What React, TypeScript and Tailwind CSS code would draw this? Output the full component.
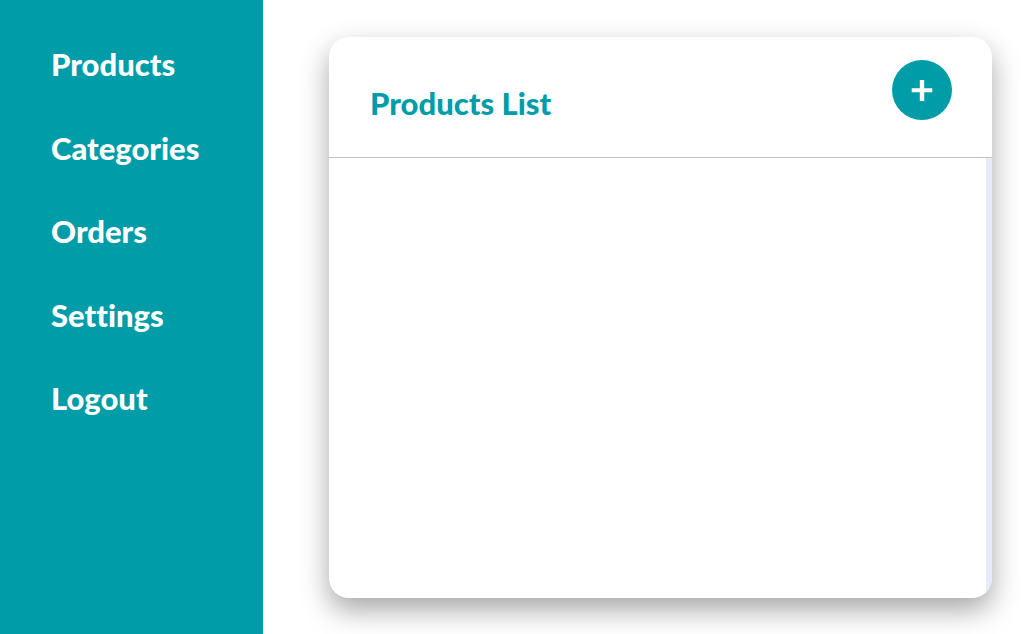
const links = ["Products", "Categories", "Orders", "Settings", "Logout"];

export default function App() {
  return (
    <div className="flex min-h-screen bg-white font-['Lato',sans-serif] font-black [font-variant-ligatures:none]">
      <aside className="w-[263px] shrink-0 bg-[#009ca8] pt-6">
        <nav aria-label="Main">
          <ul className="grid min-h-[418px] auto-rows-fr">
            {links.map((label) => (
              <li key={label}>
                <a
                  href={"#" + label.toLowerCase()}
                  className="block pl-[51px] text-[31px] leading-[80px] text-white"
                >
                  {label}
                </a>
              </li>
            ))}
          </ul>
        </nav>
      </aside>
      <main className="flex min-w-0 flex-1 pt-[37px] pr-[31px] pb-9 pl-[66px]">
        <section className="flex flex-1 flex-col overflow-hidden rounded-[20px] bg-white shadow-[0_12px_28px_rgba(0,0,0,0.35)]">
          <header className="flex items-start justify-between border-b border-[#c4c4c4] pt-[23px] pr-10 pb-9 pl-[41px]">
            <h1 className="pt-[25px] text-[31px] leading-9 text-[#009ca8]">
              Products List
            </h1>
            <button
              type="button"
              aria-label="Add product"
              className="flex size-[60px] items-center justify-center rounded-full bg-[#009ca8] text-white"
            >
              <svg viewBox="0 0 22 22" className="size-[22px]" fill="currentColor" aria-hidden="true">
                <path d="M8.8 1h4.4v8.3h8.1v4h-8.1V22H8.8v-8.7H.7v-4h8.1z" />
              </svg>
            </button>
          </header>
          <div className="flex-1 border-r-[6px] border-[#e6eaf9]" />
        </section>
      </main>
    </div>
  );
}
